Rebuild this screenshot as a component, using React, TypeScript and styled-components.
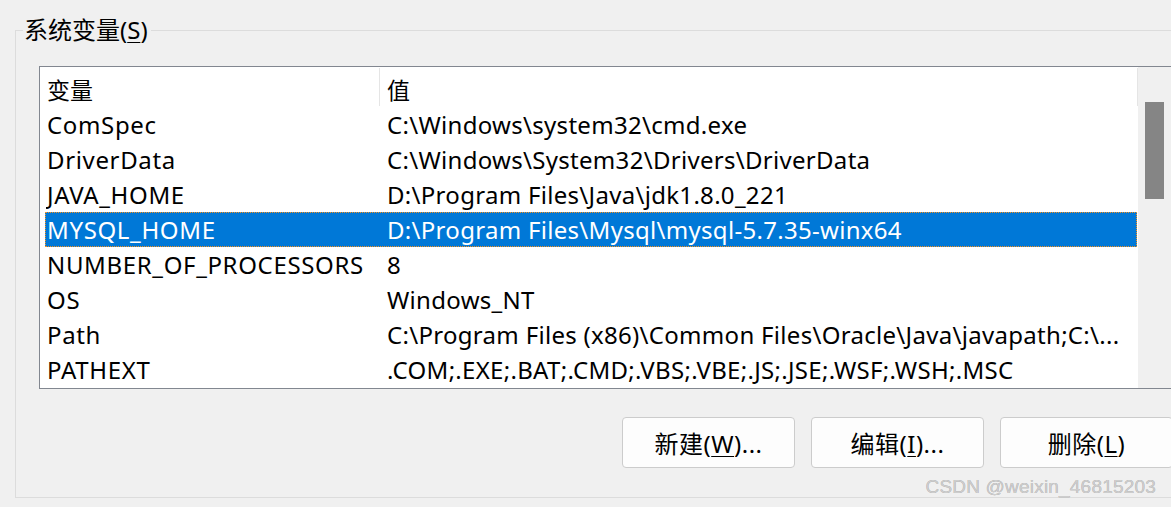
import styled, { createGlobalStyle } from 'styled-components';

const GlobalStyle = createGlobalStyle`
  html, body {
    margin: 0;
    padding: 0;
    background: #f0f0f0;
  }
  body {
    font-family: "Noto Sans", "Noto Sans CJK SC", sans-serif;
    color: #000;
  }
`;

type EnvVar = { name: string; value: string };

const variables: EnvVar[] = [
  { name: 'ComSpec', value: 'C:\\Windows\\system32\\cmd.exe' },
  { name: 'DriverData', value: 'C:\\Windows\\System32\\Drivers\\DriverData' },
  { name: 'JAVA_HOME', value: 'D:\\Program Files\\Java\\jdk1.8.0_221' },
  { name: 'MYSQL_HOME', value: 'D:\\Program Files\\Mysql\\mysql-5.7.35-winx64' },
  { name: 'NUMBER_OF_PROCESSORS', value: '8' },
  { name: 'OS', value: 'Windows_NT' },
  {
    name: 'Path',
    value: 'C:\\Program Files (x86)\\Common Files\\Oracle\\Java\\javapath;C:\\...',
  },
  { name: 'PATHEXT', value: '.COM;.EXE;.BAT;.CMD;.VBS;.VBE;.JS;.JSE;.WSF;.WSH;.MSC' },
];

const SELECTED = 'MYSQL_HOME';

export default function App() {
  return (
    <Page>
      <GlobalStyle />
      <GroupBox>
        <Legend>
          系统变量(<u>S</u>)
        </Legend>
        <ListBox>
          <ListContent>
            <HeaderRow>
              <HeaderCell>变量</HeaderCell>
              <HeaderCell>值</HeaderCell>
            </HeaderRow>
            {variables.map((v) => (
              <Row key={v.name} $selected={v.name === SELECTED}>
                <Cell>{v.name}</Cell>
                <Cell $second>{v.value}</Cell>
              </Row>
            ))}
          </ListContent>
          <ScrollTrack>
            <ScrollThumb />
          </ScrollTrack>
        </ListBox>
        <ButtonRow>
          <Button>
            新建(<u>W</u>)...
          </Button>
          <Button>
            编辑(<u>I</u>)...
          </Button>
          <Button>
            删除(<u>L</u>)
          </Button>
        </ButtonRow>
        <Watermark>CSDN @weixin_46815203</Watermark>
      </GroupBox>
    </Page>
  );
}

const Page = styled.div`
  width: 1171px;
  height: 507px;
  overflow: hidden;
  padding-top: 17px;
  box-sizing: border-box;
`;

const GroupBox = styled.fieldset`
  position: relative;
  margin: 0 0 0 15px;
  width: 1156px;
  box-sizing: border-box;
  padding: 0 0 29px 0;
  border: 1px solid #dcdcdc;
  border-right: none;
  min-width: 0;
`;

const Legend = styled.legend`
  margin-left: 7px;
  padding: 0 3px 0 1px;
  font-size: 24px;
  line-height: 26px;
  color: #000;

  u {
    text-decoration-thickness: 1px;
    text-underline-offset: 3px;
  }
`;

const ListBox = styled.div`
  margin: 23px 0 0 23px;
  height: 321px;
  display: flex;
  border: 1px solid #828790;
  border-right: none;
  background: #fff;
  overflow: hidden;
`;

const ListContent = styled.div`
  flex: 1;
  min-width: 0;
  overflow: hidden;
`;

const HeaderRow = styled.div`
  display: grid;
  grid-template-columns: 340px 1fr;
  height: 40px;
  font-size: 23px;
  align-items: center;
`;

const HeaderCell = styled.div`
  height: 38px;
  display: flex;
  align-items: center;
  padding: 4px 0 0 7px;
  box-sizing: border-box;
  border-right: 1px solid #e5e5e5;
`;

const Row = styled.div<{ $selected?: boolean }>`
  display: grid;
  grid-template-columns: 335px 1fr;
  height: 35px;
  margin: 0 1px 0 5px;
  box-sizing: border-box;
  align-items: center;
  font-size: 24px;
  white-space: nowrap;
  background: ${(p) => (p.$selected ? '#0078d7' : 'transparent')};
  color: ${(p) => (p.$selected ? '#fff' : '#000')};
  border: 1px dotted ${(p) => (p.$selected ? '#f7921e' : 'transparent')};
`;

const Cell = styled.div<{ $second?: boolean }>`
  padding-left: ${(p) => (p.$second ? '6px' : '1px')};
  letter-spacing: ${(p) => (p.$second ? '0.3px' : '0.65px')};
  overflow: hidden;
`;

const ScrollTrack = styled.div`
  width: 33px;
  flex: none;
  background: #f0f0f0;
  padding: 35px 7px 0 7px;
  box-sizing: border-box;
`;

const ScrollThumb = styled.div`
  height: 97px;
  background: #858585;
`;

const ButtonRow = styled.div`
  display: flex;
  justify-content: flex-end;
  gap: 16px;
  margin: 28px -2px 0 0;
`;

const Button = styled.button`
  width: 173px;
  height: 51px;
  box-sizing: border-box;
  border: 1px solid #cccccc;
  border-radius: 4px;
  background: #fdfdfd;
  font-family: "Noto Sans", "Noto Sans CJK SC", sans-serif;
  font-size: 24px;
  letter-spacing: 0.5px;
  color: #000;
  padding: 0;

  u {
    text-decoration-thickness: 1px;
    text-underline-offset: 3px;
  }
`;

const Watermark = styled.div`
  position: absolute;
  right: 15px;
  bottom: -1px;
  font-family: "Liberation Sans", Arial, sans-serif;
  font-size: 19px;
  letter-spacing: 0.2px;
  color: #cdcdcd;
  text-shadow: 0 0 0.5px #8f8f8f;
  pointer-events: none;
`;
